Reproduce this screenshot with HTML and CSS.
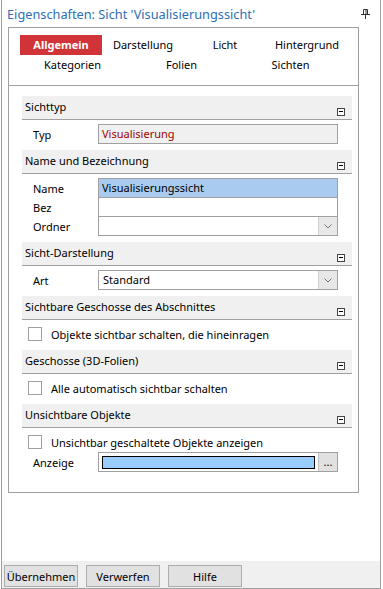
FILE: index.html
```html
<!DOCTYPE html>
<html lang="de">
<head>
    <meta charset="UTF-8">
    <title>Eigenschaften: Sicht</title>
    <link rel="stylesheet" href="styles.css">
</head>
<body>
<div class="window">

    <!-- Title bar -->
    <div class="titlebar">
        <span class="title">Eigenschaften: Sicht 'Visualisierungssicht'</span>
        <svg class="pin" width="9" height="10" viewBox="0 0 9 10">
            <path d="M2.5 0.5h4v5h-4z" fill="none" stroke="#333"/>
            <path d="M5 1v4" stroke="#333" stroke-width="1"/>
            <path d="M0 5.5h9" stroke="#333"/>
            <path d="M4.5 6v4" stroke="#333"/>
        </svg>
    </div>

    <div class="panel">
        <!-- Tabs -->
        <div class="tabs">
            <div class="tab-row first">
                <div class="tab active">Allgemein</div>
                <div class="tab">Darstellung</div>
                <div class="tab">Licht</div>
                <div class="tab">Hintergrund</div>
            </div>
            <div class="tab-row second">
                <div class="tab">Kategorien</div>
                <div class="tab">Folien</div>
                <div class="tab">Sichten</div>
            </div>
        </div>

        <div class="sections">
            <div class="section">
                <div class="section-head"><span>Sichttyp</span><i class="collapse"></i></div>
                <div class="section-body">
                    <div class="row">
                        <div class="label">Typ</div>
                        <div class="field readonly">Visualisierung</div>
                    </div>
                </div>
            </div>

            <div class="section">
                <div class="section-head"><span>Name und Bezeichnung</span><i class="collapse"></i></div>
                <div class="section-body stack">
                    <div class="row">
                        <div class="label">Name</div>
                        <div class="field selected">Visualisierungssicht</div>
                    </div>
                    <div class="row">
                        <div class="label">Bez</div>
                        <div class="field"></div>
                    </div>
                    <div class="row">
                        <div class="label">Ordner</div>
                        <div class="field select">
                            <span class="value"></span>
                            <span class="drop">
                                <svg width="8" height="5" viewBox="0 0 8 5"><path d="M0.5 0.5l3.5 3.5l3.5-3.5" fill="none" stroke="#777"/></svg>
                            </span>
                        </div>
                    </div>
                </div>
            </div>

            <div class="section">
                <div class="section-head"><span>Sicht-Darstellung</span><i class="collapse"></i></div>
                <div class="section-body">
                    <div class="row">
                        <div class="label">Art</div>
                        <div class="field select">
                            <span class="value">Standard</span>
                            <span class="drop">
                                <svg width="8" height="5" viewBox="0 0 8 5"><path d="M0.5 0.5l3.5 3.5l3.5-3.5" fill="none" stroke="#777"/></svg>
                            </span>
                        </div>
                    </div>
                </div>
            </div>

            <div class="section">
                <div class="section-head"><span>Sichtbare Geschosse des Abschnittes</span><i class="collapse"></i></div>
                <div class="section-body">
                    <label class="check"><span class="box"></span>Objekte sichtbar schalten, die hineinragen</label>
                </div>
            </div>

            <div class="section">
                <div class="section-head"><span>Geschosse (3D-Folien)</span><i class="collapse"></i></div>
                <div class="section-body">
                    <label class="check"><span class="box"></span>Alle automatisch sichtbar schalten</label>
                </div>
            </div>

            <div class="section">
                <div class="section-head"><span>Unsichtbare Objekte</span><i class="collapse"></i></div>
                <div class="section-body">
                    <label class="check"><span class="box"></span>Unsichtbar geschaltete Objekte anzeigen</label>
                    <div class="row">
                        <div class="label">Anzeige</div>
                        <div class="field color">
                            <span class="swatch"></span>
                            <span class="more">...</span>
                        </div>
                    </div>
                </div>
            </div>
        </div>
    </div>

    <!-- Buttons -->
    <div class="buttonbar">
        <button class="btn">Übernehmen</button>
        <button class="btn">Verwerfen</button>
        <button class="btn">Hilfe</button>
    </div>
</div>
</body>
</html>
```

FILE: styles.css
```css
/* General */
body {
    margin: 0;
    background: #fff;
    font-family: "Noto Sans", "Open Sans", sans-serif;
    font-size: 11px;
    color: #000;
}

.window {
    width: 380px;
    height: 589px;
    margin-left: 1px;
    box-sizing: border-box;
    border: 1px solid #a0a0a0;
    border-top: none;
    display: flex;
    flex-direction: column;
    background: #fff;
}

/* Title bar */
.titlebar {
    height: 27px;
    display: flex;
    align-items: center;
    justify-content: space-between;
    padding: 0 10px 0 5px;
}

.title {
    font-size: 12.75px;
    color: #2b6fb6;
}

.pin {
    display: block;
}

/* Main panel */
.panel {
    width: 351px;
    margin-left: 6px;
    box-sizing: border-box;
    border: 1px solid #a0a0a0;
    padding-bottom: 20px;
}

/* Tabs */
.tabs {
    padding: 7px 0 10px 11px;
    border-bottom: 1px solid #a0a0a0;
}

.tab-row {
    display: grid;
}

.tab-row.first {
    grid-template-columns: repeat(4, 82px);
}

.tab-row.second {
    grid-template-columns: repeat(3, 109px);
    margin-left: -2px;
}

.tab {
    height: 20px;
    line-height: 20px;
    text-align: center;
}

.tab.active {
    background: #d13438;
    color: #fff;
    font-weight: bold;
}

/* Sections */
.sections {
    padding: 10px 6px 0 13px;
}

.section + .section {
    margin-top: 6px;
}

.section-head {
    height: 24px;
    box-sizing: border-box;
    background: #f0f0f0;
    border-bottom: 1px solid #a0a0a0;
    display: flex;
    justify-content: space-between;
    padding: 0 7px 0 3px;
    line-height: 22px;
}

.collapse {
    align-self: flex-end;
    margin-bottom: 3px;
    width: 8px;
    height: 8px;
    box-sizing: border-box;
    border: 1px solid #444;
    background: #fff;
    position: relative;
}

.collapse::after {
    content: '';
    position: absolute;
    left: 1px;
    top: 2px;
    width: 4px;
    border-top: 1px solid #000;
}

.section-body {
    padding-top: 4px;
}

.row {
    display: flex;
    align-items: center;
    height: 20px;
    padding-left: 11px;
}

.stack .row + .row {
    margin-top: -1px;
}

.label {
    width: 65px;
}

.field {
    width: 240px;
    height: 20px;
    box-sizing: border-box;
    border: 1px solid #a0a0a0;
    padding-left: 3px;
    line-height: 18px;
    background: #fff;
    display: flex;
}

.field.readonly {
    background: #f0f0f0;
    color: #9b0000;
}

.field.selected {
    background: #a8cbef;
}

.field.select .value {
    flex: 1;
    padding-left: 1px;
}

.drop,
.more {
    width: 18px;
    background: #e8e8e8;
    border-left: 1px solid #d0d0d0;
    display: flex;
    align-items: center;
    justify-content: center;
}

.more {
    background: #e1e1e1;
    border-left-color: #c0c0c0;
    line-height: 14px;
}

.field.color {
    padding: 3px 0 2px 3px;
    align-items: stretch;
}

.field.color .more {
    margin: -3px 0 -2px 3px;
}

.swatch {
    flex: 1;
    background: #99ccff;
    border: 1px solid #000;
}

/* Checkboxes */
.check {
    display: flex;
    align-items: center;
    height: 20px;
    padding-left: 6px;
}

.box {
    width: 14px;
    height: 14px;
    box-sizing: border-box;
    border: 1px solid #a0a0a0;
    background: #fff;
    margin-right: 9px;
}

/* Bottom buttons */
.buttonbar {
    margin-top: auto;
    height: 27px;
    box-sizing: border-box;
    background: #f0f0f0;
    padding: 4px 0 0 2px;
    display: flex;
    gap: 8px;
    align-items: flex-start;
}

.btn {
    width: 74px;
    height: 22px;
    margin: 0;
    padding: 0;
    background: #e1e1e1;
    border: 1px solid #adadad;
    font-family: inherit;
    font-size: 11px;
    color: #000;
}
```
